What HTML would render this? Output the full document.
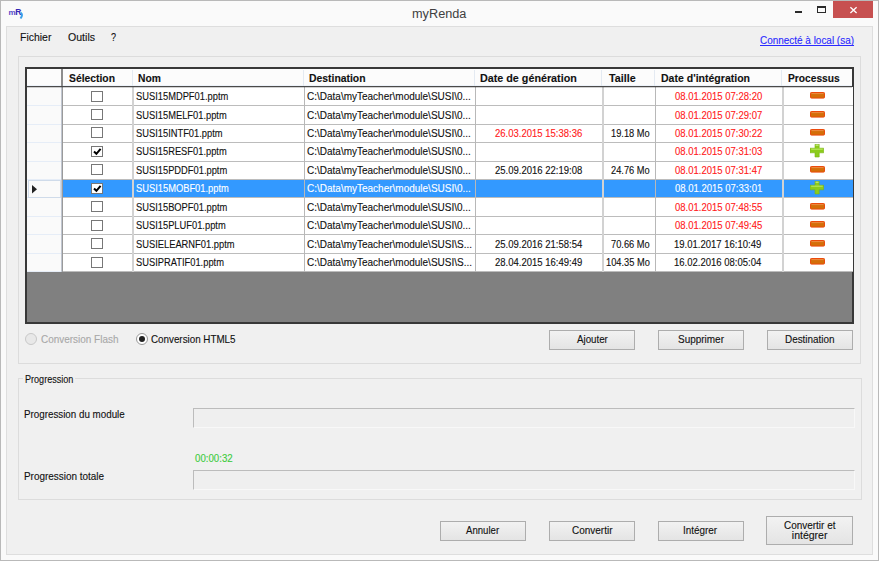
<!DOCTYPE html><html><head><meta charset="utf-8"><title>myRenda</title><style>
*{margin:0;padding:0;box-sizing:border-box}
html,body{width:879px;height:561px;overflow:hidden;background:#fafafa}
body{position:relative;font-family:"Liberation Sans",sans-serif;color:#000}
.a{position:absolute}
.t{position:absolute;white-space:pre;line-height:14px;height:14px;-webkit-text-stroke:0.12px currentColor}
</style></head><body>
<div class="a" style="left:0;top:0;width:879px;height:561px;border:1px solid #b9b9b9;background:#fafafa"></div>
<svg class="a" style="left:8px;top:8px" width="17" height="12"><text x="0.5" y="7" font-family="Liberation Sans" font-weight="bold" font-size="8" fill="#5548c8" letter-spacing="-0.6">m</text><text x="7.2" y="7" font-family="Liberation Sans" font-weight="bold" font-size="8.5" fill="#3426b4">R</text><path d="M12.5 4.5 Q15.5 6.5 12.5 10.5" stroke="#3aa0ea" stroke-width="2" fill="none"/></svg>
<div class="a" style="left:795px;top:11px;width:7px;height:2px;background:#2a2a2a"></div>
<div class="a" style="left:817px;top:6px;width:9px;height:7px;border:1px solid #2a2a2a;border-top-width:2px"></div>
<div class="a" style="left:833px;top:1px;width:40px;height:17px;background:#c75050"></div>
<svg class="a" style="left:849px;top:6px" width="9" height="8"><path d="M1.4 1.2 L7.6 7 M7.6 1.2 L1.4 7" stroke="#fff" stroke-width="1.3"/></svg>
<div class="a" style="left:6px;top:26px;width:867px;height:529px;background:#f0f0f0;border:1px solid #dedede"></div>
<div class="a" style="left:18px;top:56px;width:843px;height:308px;border:1px solid #dcdcdc"></div>
<div class="a" style="left:25px;top:67px;width:829px;height:257px;background:#808080;border:2px solid #383838"></div>
<div class="a" style="left:27px;top:69px;width:825px;height:17px;background:#fcfcfc"></div>
<div class="a" style="left:27px;top:86px;width:825px;height:1px;background:#4a4a4a"></div>
<div class="a" style="left:27px;top:85px;width:825px;height:1px;background:#eef3fa"></div>
<div class="a" style="left:61px;top:69px;width:2px;height:17px;background:#8c8c8c"></div>
<div class="a" style="left:132px;top:70px;width:1px;height:16px;background:#e4eaf2"></div>
<div class="a" style="left:303px;top:70px;width:1px;height:16px;background:#e4eaf2"></div>
<div class="a" style="left:474px;top:70px;width:1px;height:16px;background:#e4eaf2"></div>
<div class="a" style="left:601px;top:70px;width:1px;height:16px;background:#e4eaf2"></div>
<div class="a" style="left:654px;top:70px;width:1px;height:16px;background:#e4eaf2"></div>
<div class="a" style="left:781px;top:70px;width:1px;height:16px;background:#e4eaf2"></div>
<div class="a" style="left:27px;top:87px;width:34px;height:18px;background:#fafafa"></div>
<div class="a" style="left:27px;top:105px;width:34px;height:1px;background:#e6edf7"></div>
<div class="a" style="left:62px;top:87px;width:791px;height:18px;background:#fff"></div>
<div class="a" style="left:61px;top:105px;width:792px;height:1px;background:#bcbcbc"></div>
<div class="a" style="left:61px;top:87px;width:1px;height:19px;background:#c0c6d0"></div>
<div class="a" style="left:62px;top:87px;width:1px;height:19px;background:#9a9a9a"></div>
<div class="a" style="left:132px;top:87px;width:2px;height:19px;background:#d2d2d2"></div>
<div class="a" style="left:304px;top:87px;width:1px;height:19px;background:#b8b8b8"></div>
<div class="a" style="left:475px;top:87px;width:1px;height:19px;background:#b8b8b8"></div>
<div class="a" style="left:602px;top:87px;width:2px;height:19px;background:#d2d2d2"></div>
<div class="a" style="left:655px;top:87px;width:1px;height:19px;background:#b8b8b8"></div>
<div class="a" style="left:782px;top:87px;width:2px;height:19px;background:#d2d2d2"></div>
<div class="a" style="left:91px;top:91px;width:12px;height:11px;border:1px solid #777;background:#fff"></div>
<svg class="a" style="left:810px;top:92px" width="15" height="7"><rect x="0.5" y="0.5" width="14" height="5.6" rx="0.8" fill="#d46e08" stroke="#ec4a0c" stroke-width="1"/><path d="M1.5 1.6h12" stroke="#f49050" stroke-width="0.8"/></svg>
<div class="a" style="left:27px;top:106px;width:34px;height:18px;background:#fafafa"></div>
<div class="a" style="left:27px;top:124px;width:34px;height:1px;background:#e6edf7"></div>
<div class="a" style="left:62px;top:106px;width:791px;height:18px;background:#fff"></div>
<div class="a" style="left:61px;top:124px;width:792px;height:1px;background:#bcbcbc"></div>
<div class="a" style="left:61px;top:106px;width:1px;height:19px;background:#c0c6d0"></div>
<div class="a" style="left:62px;top:106px;width:1px;height:19px;background:#9a9a9a"></div>
<div class="a" style="left:132px;top:106px;width:2px;height:19px;background:#d2d2d2"></div>
<div class="a" style="left:304px;top:106px;width:1px;height:19px;background:#b8b8b8"></div>
<div class="a" style="left:475px;top:106px;width:1px;height:19px;background:#b8b8b8"></div>
<div class="a" style="left:602px;top:106px;width:2px;height:19px;background:#d2d2d2"></div>
<div class="a" style="left:655px;top:106px;width:1px;height:19px;background:#b8b8b8"></div>
<div class="a" style="left:782px;top:106px;width:2px;height:19px;background:#d2d2d2"></div>
<div class="a" style="left:91px;top:109px;width:12px;height:11px;border:1px solid #777;background:#fff"></div>
<svg class="a" style="left:810px;top:111px" width="15" height="7"><rect x="0.5" y="0.5" width="14" height="5.6" rx="0.8" fill="#d46e08" stroke="#ec4a0c" stroke-width="1"/><path d="M1.5 1.6h12" stroke="#f49050" stroke-width="0.8"/></svg>
<div class="a" style="left:27px;top:125px;width:34px;height:17px;background:#fafafa"></div>
<div class="a" style="left:27px;top:142px;width:34px;height:1px;background:#e6edf7"></div>
<div class="a" style="left:62px;top:125px;width:791px;height:17px;background:#fff"></div>
<div class="a" style="left:61px;top:142px;width:792px;height:1px;background:#bcbcbc"></div>
<div class="a" style="left:61px;top:125px;width:1px;height:18px;background:#c0c6d0"></div>
<div class="a" style="left:62px;top:125px;width:1px;height:18px;background:#9a9a9a"></div>
<div class="a" style="left:132px;top:125px;width:2px;height:18px;background:#d2d2d2"></div>
<div class="a" style="left:304px;top:125px;width:1px;height:18px;background:#b8b8b8"></div>
<div class="a" style="left:475px;top:125px;width:1px;height:18px;background:#b8b8b8"></div>
<div class="a" style="left:602px;top:125px;width:2px;height:18px;background:#d2d2d2"></div>
<div class="a" style="left:655px;top:125px;width:1px;height:18px;background:#b8b8b8"></div>
<div class="a" style="left:782px;top:125px;width:2px;height:18px;background:#d2d2d2"></div>
<div class="a" style="left:91px;top:127px;width:12px;height:11px;border:1px solid #777;background:#fff"></div>
<svg class="a" style="left:810px;top:129px" width="15" height="7"><rect x="0.5" y="0.5" width="14" height="5.6" rx="0.8" fill="#d46e08" stroke="#ec4a0c" stroke-width="1"/><path d="M1.5 1.6h12" stroke="#f49050" stroke-width="0.8"/></svg>
<div class="a" style="left:27px;top:143px;width:34px;height:18px;background:#fafafa"></div>
<div class="a" style="left:27px;top:161px;width:34px;height:1px;background:#e6edf7"></div>
<div class="a" style="left:62px;top:143px;width:791px;height:18px;background:#fff"></div>
<div class="a" style="left:61px;top:161px;width:792px;height:1px;background:#bcbcbc"></div>
<div class="a" style="left:61px;top:143px;width:1px;height:19px;background:#c0c6d0"></div>
<div class="a" style="left:62px;top:143px;width:1px;height:19px;background:#9a9a9a"></div>
<div class="a" style="left:132px;top:143px;width:2px;height:19px;background:#d2d2d2"></div>
<div class="a" style="left:304px;top:143px;width:1px;height:19px;background:#b8b8b8"></div>
<div class="a" style="left:475px;top:143px;width:1px;height:19px;background:#b8b8b8"></div>
<div class="a" style="left:602px;top:143px;width:2px;height:19px;background:#d2d2d2"></div>
<div class="a" style="left:655px;top:143px;width:1px;height:19px;background:#b8b8b8"></div>
<div class="a" style="left:782px;top:143px;width:2px;height:19px;background:#d2d2d2"></div>
<div class="a" style="left:91px;top:146px;width:12px;height:11px;border:1px solid #777;background:#fff"></div>
<svg class="a" style="left:91px;top:146px" width="12" height="11"><path d="M3 5.5 L5.4 7.8 L9.6 2.8" stroke="#000" stroke-width="2" fill="none"/></svg>
<svg class="a" style="left:810px;top:144px" width="14" height="14"><path d="M5 0.2h4.2v4h4.5v4.6h-4.5v4.2h-4.2v-4.2h-5v-4.6h5z" fill="#8ccc1c" stroke="#78b414" stroke-width="0.6"/><path d="M1.2 5.2h11.5" stroke="#c4ee6c" stroke-width="0.9"/><path d="M5.6 1.2h3" stroke="#d8f49a" stroke-width="0.9"/></svg>
<div class="a" style="left:27px;top:162px;width:34px;height:17px;background:#fafafa"></div>
<div class="a" style="left:27px;top:179px;width:34px;height:1px;background:#e6edf7"></div>
<div class="a" style="left:62px;top:162px;width:791px;height:17px;background:#fff"></div>
<div class="a" style="left:61px;top:179px;width:792px;height:1px;background:#bcbcbc"></div>
<div class="a" style="left:61px;top:162px;width:1px;height:18px;background:#c0c6d0"></div>
<div class="a" style="left:62px;top:162px;width:1px;height:18px;background:#9a9a9a"></div>
<div class="a" style="left:132px;top:162px;width:2px;height:18px;background:#d2d2d2"></div>
<div class="a" style="left:304px;top:162px;width:1px;height:18px;background:#b8b8b8"></div>
<div class="a" style="left:475px;top:162px;width:1px;height:18px;background:#b8b8b8"></div>
<div class="a" style="left:602px;top:162px;width:2px;height:18px;background:#d2d2d2"></div>
<div class="a" style="left:655px;top:162px;width:1px;height:18px;background:#b8b8b8"></div>
<div class="a" style="left:782px;top:162px;width:2px;height:18px;background:#d2d2d2"></div>
<div class="a" style="left:91px;top:164px;width:12px;height:11px;border:1px solid #777;background:#fff"></div>
<svg class="a" style="left:810px;top:166px" width="15" height="7"><rect x="0.5" y="0.5" width="14" height="5.6" rx="0.8" fill="#d46e08" stroke="#ec4a0c" stroke-width="1"/><path d="M1.5 1.6h12" stroke="#f49050" stroke-width="0.8"/></svg>
<div class="a" style="left:27px;top:180px;width:34px;height:17px;background:#fafafa"></div>
<div class="a" style="left:27px;top:197px;width:34px;height:1px;background:#e6edf7"></div>
<div class="a" style="left:28px;top:180px;width:33px;height:18px;border:1px solid #cfdbea"></div>
<svg class="a" style="left:32px;top:185px" width="6" height="9"><path d="M0 0 L5 4.3 L0 8.6Z" fill="#222"/></svg>
<div class="a" style="left:62px;top:180px;width:791px;height:17px;background:#3399ff"></div>
<div class="a" style="left:61px;top:197px;width:792px;height:1px;background:#bcbcbc"></div>
<div class="a" style="left:61px;top:180px;width:1px;height:18px;background:#c0c6d0"></div>
<div class="a" style="left:62px;top:180px;width:1px;height:18px;background:#9a9a9a"></div>
<div class="a" style="left:132px;top:180px;width:2px;height:18px;background:#d2d2d2"></div>
<div class="a" style="left:304px;top:180px;width:1px;height:18px;background:#b8b8b8"></div>
<div class="a" style="left:475px;top:180px;width:1px;height:18px;background:#b8b8b8"></div>
<div class="a" style="left:602px;top:180px;width:2px;height:18px;background:#d2d2d2"></div>
<div class="a" style="left:655px;top:180px;width:1px;height:18px;background:#b8b8b8"></div>
<div class="a" style="left:782px;top:180px;width:2px;height:18px;background:#d2d2d2"></div>
<div class="a" style="left:91px;top:183px;width:12px;height:11px;border:1px solid #777;background:#fff"></div>
<svg class="a" style="left:91px;top:183px" width="12" height="11"><path d="M3 5.5 L5.4 7.8 L9.6 2.8" stroke="#000" stroke-width="2" fill="none"/></svg>
<svg class="a" style="left:810px;top:181px" width="14" height="14"><path d="M5 0.2h4.2v4h4.5v4.6h-4.5v4.2h-4.2v-4.2h-5v-4.6h5z" fill="#8ccc1c" stroke="#78b414" stroke-width="0.6"/><path d="M1.2 5.2h11.5" stroke="#c4ee6c" stroke-width="0.9"/><path d="M5.6 1.2h3" stroke="#d8f49a" stroke-width="0.9"/></svg>
<div class="a" style="left:27px;top:198px;width:34px;height:18px;background:#fafafa"></div>
<div class="a" style="left:27px;top:216px;width:34px;height:1px;background:#e6edf7"></div>
<div class="a" style="left:62px;top:198px;width:791px;height:18px;background:#fff"></div>
<div class="a" style="left:61px;top:216px;width:792px;height:1px;background:#bcbcbc"></div>
<div class="a" style="left:61px;top:198px;width:1px;height:19px;background:#c0c6d0"></div>
<div class="a" style="left:62px;top:198px;width:1px;height:19px;background:#9a9a9a"></div>
<div class="a" style="left:132px;top:198px;width:2px;height:19px;background:#d2d2d2"></div>
<div class="a" style="left:304px;top:198px;width:1px;height:19px;background:#b8b8b8"></div>
<div class="a" style="left:475px;top:198px;width:1px;height:19px;background:#b8b8b8"></div>
<div class="a" style="left:602px;top:198px;width:2px;height:19px;background:#d2d2d2"></div>
<div class="a" style="left:655px;top:198px;width:1px;height:19px;background:#b8b8b8"></div>
<div class="a" style="left:782px;top:198px;width:2px;height:19px;background:#d2d2d2"></div>
<div class="a" style="left:91px;top:201px;width:12px;height:11px;border:1px solid #777;background:#fff"></div>
<svg class="a" style="left:810px;top:203px" width="15" height="7"><rect x="0.5" y="0.5" width="14" height="5.6" rx="0.8" fill="#d46e08" stroke="#ec4a0c" stroke-width="1"/><path d="M1.5 1.6h12" stroke="#f49050" stroke-width="0.8"/></svg>
<div class="a" style="left:27px;top:217px;width:34px;height:17px;background:#fafafa"></div>
<div class="a" style="left:27px;top:234px;width:34px;height:1px;background:#e6edf7"></div>
<div class="a" style="left:62px;top:217px;width:791px;height:17px;background:#fff"></div>
<div class="a" style="left:61px;top:234px;width:792px;height:1px;background:#bcbcbc"></div>
<div class="a" style="left:61px;top:217px;width:1px;height:18px;background:#c0c6d0"></div>
<div class="a" style="left:62px;top:217px;width:1px;height:18px;background:#9a9a9a"></div>
<div class="a" style="left:132px;top:217px;width:2px;height:18px;background:#d2d2d2"></div>
<div class="a" style="left:304px;top:217px;width:1px;height:18px;background:#b8b8b8"></div>
<div class="a" style="left:475px;top:217px;width:1px;height:18px;background:#b8b8b8"></div>
<div class="a" style="left:602px;top:217px;width:2px;height:18px;background:#d2d2d2"></div>
<div class="a" style="left:655px;top:217px;width:1px;height:18px;background:#b8b8b8"></div>
<div class="a" style="left:782px;top:217px;width:2px;height:18px;background:#d2d2d2"></div>
<div class="a" style="left:91px;top:220px;width:12px;height:11px;border:1px solid #777;background:#fff"></div>
<svg class="a" style="left:810px;top:221px" width="15" height="7"><rect x="0.5" y="0.5" width="14" height="5.6" rx="0.8" fill="#d46e08" stroke="#ec4a0c" stroke-width="1"/><path d="M1.5 1.6h12" stroke="#f49050" stroke-width="0.8"/></svg>
<div class="a" style="left:27px;top:235px;width:34px;height:18px;background:#fafafa"></div>
<div class="a" style="left:27px;top:253px;width:34px;height:1px;background:#e6edf7"></div>
<div class="a" style="left:62px;top:235px;width:791px;height:18px;background:#fff"></div>
<div class="a" style="left:61px;top:253px;width:792px;height:1px;background:#bcbcbc"></div>
<div class="a" style="left:61px;top:235px;width:1px;height:19px;background:#c0c6d0"></div>
<div class="a" style="left:62px;top:235px;width:1px;height:19px;background:#9a9a9a"></div>
<div class="a" style="left:132px;top:235px;width:2px;height:19px;background:#d2d2d2"></div>
<div class="a" style="left:304px;top:235px;width:1px;height:19px;background:#b8b8b8"></div>
<div class="a" style="left:475px;top:235px;width:1px;height:19px;background:#b8b8b8"></div>
<div class="a" style="left:602px;top:235px;width:2px;height:19px;background:#d2d2d2"></div>
<div class="a" style="left:655px;top:235px;width:1px;height:19px;background:#b8b8b8"></div>
<div class="a" style="left:782px;top:235px;width:2px;height:19px;background:#d2d2d2"></div>
<div class="a" style="left:91px;top:238px;width:12px;height:11px;border:1px solid #777;background:#fff"></div>
<svg class="a" style="left:810px;top:240px" width="15" height="7"><rect x="0.5" y="0.5" width="14" height="5.6" rx="0.8" fill="#d46e08" stroke="#ec4a0c" stroke-width="1"/><path d="M1.5 1.6h12" stroke="#f49050" stroke-width="0.8"/></svg>
<div class="a" style="left:27px;top:254px;width:34px;height:17px;background:#fafafa"></div>
<div class="a" style="left:27px;top:271px;width:34px;height:1px;background:#e6edf7"></div>
<div class="a" style="left:62px;top:254px;width:791px;height:17px;background:#fff"></div>
<div class="a" style="left:61px;top:271px;width:792px;height:1px;background:#bcbcbc"></div>
<div class="a" style="left:61px;top:254px;width:1px;height:18px;background:#c0c6d0"></div>
<div class="a" style="left:62px;top:254px;width:1px;height:18px;background:#9a9a9a"></div>
<div class="a" style="left:132px;top:254px;width:2px;height:18px;background:#d2d2d2"></div>
<div class="a" style="left:304px;top:254px;width:1px;height:18px;background:#b8b8b8"></div>
<div class="a" style="left:475px;top:254px;width:1px;height:18px;background:#b8b8b8"></div>
<div class="a" style="left:602px;top:254px;width:2px;height:18px;background:#d2d2d2"></div>
<div class="a" style="left:655px;top:254px;width:1px;height:18px;background:#b8b8b8"></div>
<div class="a" style="left:782px;top:254px;width:2px;height:18px;background:#d2d2d2"></div>
<div class="a" style="left:91px;top:257px;width:12px;height:11px;border:1px solid #777;background:#fff"></div>
<svg class="a" style="left:810px;top:258px" width="15" height="7"><rect x="0.5" y="0.5" width="14" height="5.6" rx="0.8" fill="#d46e08" stroke="#ec4a0c" stroke-width="1"/><path d="M1.5 1.6h12" stroke="#f49050" stroke-width="0.8"/></svg>
<div class="a" style="left:27px;top:87px;width:825px;height:1px;background:rgba(0,0,0,0.18)"></div>
<div class="a" style="left:25px;top:333px;width:12px;height:12px;border-radius:50%;border:1px solid #c8c8c8;background:#e8e8e8"></div>
<div class="a" style="left:136px;top:333px;width:12px;height:12px;border-radius:50%;border:1px solid #999;background:#fff"></div>
<div class="a" style="left:139px;top:336px;width:6px;height:6px;border-radius:50%;background:#222"></div>
<div class="a" style="left:549px;top:330px;width:86px;height:20px;border:1px solid #adadad;background:linear-gradient(#f2f2f2,#e4e4e4)"></div>
<div class="a" style="left:658px;top:330px;width:86px;height:20px;border:1px solid #adadad;background:linear-gradient(#f2f2f2,#e4e4e4)"></div>
<div class="a" style="left:767px;top:330px;width:86px;height:20px;border:1px solid #adadad;background:linear-gradient(#f2f2f2,#e4e4e4)"></div>
<div class="a" style="left:18px;top:378px;width:844px;height:122px;border:1px solid #dcdcdc"></div>
<div class="a" style="left:23px;top:374px;width:52px;height:10px;background:#f0f0f0"></div>
<div class="a" style="left:193px;top:408px;width:662px;height:20px;border:1px solid #f8f8f8;border-top-color:#bcbcbc;border-left-color:#bcbcbc;background:#efefef"></div>
<div class="a" style="left:193px;top:470px;width:662px;height:20px;border:1px solid #f8f8f8;border-top-color:#bcbcbc;border-left-color:#bcbcbc;background:#efefef"></div>
<div class="a" style="left:440px;top:521px;width:86px;height:20px;border:1px solid #adadad;background:linear-gradient(#f2f2f2,#e4e4e4)"></div>
<div class="a" style="left:549px;top:521px;width:86px;height:20px;border:1px solid #adadad;background:linear-gradient(#f2f2f2,#e4e4e4)"></div>
<div class="a" style="left:658px;top:521px;width:86px;height:20px;border:1px solid #adadad;background:linear-gradient(#f2f2f2,#e4e4e4)"></div>
<div class="a" style="left:766px;top:516px;width:87px;height:29px;border:1px solid #adadad;background:linear-gradient(#f2f2f2,#e4e4e4)"></div>
<div class="t" style="left:411.94px;top:7.20px;font-size:12px;color:#404040;transform:scaleX(1.0600);transform-origin:0 0;-webkit-text-stroke:0;">myRenda</div>
<div class="t" style="left:19.65px;top:29.70px;font-size:11px;color:#111;transform:scaleX(0.9500);transform-origin:0 0;">Fichier</div>
<div class="t" style="left:67.70px;top:29.70px;font-size:11px;color:#111;transform:scaleX(0.9607);transform-origin:0 0;">Outils</div>
<div class="t" style="left:110.88px;top:29.70px;font-size:11px;color:#111;transform:scaleX(0.8200);transform-origin:0 0;">?</div>
<div class="t" style="left:759.80px;top:32.60px;font-size:10.5px;color:#2a2aff;transform:scaleX(0.9475);transform-origin:0 0;text-decoration:underline;text-decoration-skip-ink:none;">Connecté à local (sa)</div>
<div class="t" style="left:68.80px;top:70.90px;font-size:11px;font-weight:bold;color:#111;transform:scaleX(0.9408);transform-origin:0 0;">Sélection</div>
<div class="t" style="left:138.17px;top:70.90px;font-size:11px;font-weight:bold;color:#111;transform:scaleX(0.9348);transform-origin:0 0;">Nom</div>
<div class="t" style="left:309.26px;top:70.90px;font-size:11px;font-weight:bold;color:#111;transform:scaleX(0.9441);transform-origin:0 0;">Destination</div>
<div class="t" style="left:480.22px;top:70.90px;font-size:11px;font-weight:bold;color:#111;transform:scaleX(0.9776);transform-origin:0 0;">Date de génération</div>
<div class="t" style="left:609.20px;top:70.90px;font-size:11px;font-weight:bold;color:#111;transform:scaleX(0.9741);transform-origin:0 0;">Taille</div>
<div class="t" style="left:660.54px;top:70.90px;font-size:11px;font-weight:bold;color:#111;transform:scaleX(0.9565);transform-origin:0 0;">Date d'intégration</div>
<div class="t" style="left:787.97px;top:70.90px;font-size:11px;font-weight:bold;color:#111;transform:scaleX(0.9296);transform-origin:0 0;">Processus</div>
<div class="t" style="left:136.11px;top:89.05px;font-size:10.5px;color:#111;transform:scaleX(0.8883);transform-origin:0 0;">SUSI15MDPF01.pptm</div>
<div class="t" style="left:306.80px;top:89.05px;font-size:10.5px;color:#111;transform:scaleX(0.9520);transform-origin:0 0;">C:\Data\myTeacher\module\SUSI\0...</div>
<div class="t" style="left:674.50px;top:89.05px;font-size:10.5px;color:#ff2020;transform:scaleX(0.9062);transform-origin:0 0;">08.01.2015 07:28:20</div>
<div class="t" style="left:136.11px;top:107.50px;font-size:10.5px;color:#111;transform:scaleX(0.8883);transform-origin:0 0;">SUSI15MELF01.pptm</div>
<div class="t" style="left:306.80px;top:107.50px;font-size:10.5px;color:#111;transform:scaleX(0.9520);transform-origin:0 0;">C:\Data\myTeacher\module\SUSI\0...</div>
<div class="t" style="left:674.50px;top:107.50px;font-size:10.5px;color:#ff2020;transform:scaleX(0.9062);transform-origin:0 0;">08.01.2015 07:29:07</div>
<div class="t" style="left:136.11px;top:125.95px;font-size:10.5px;color:#111;transform:scaleX(0.8883);transform-origin:0 0;">SUSI15INTF01.pptm</div>
<div class="t" style="left:306.80px;top:125.95px;font-size:10.5px;color:#111;transform:scaleX(0.9520);transform-origin:0 0;">C:\Data\myTeacher\module\SUSI\0...</div>
<div class="t" style="left:494.50px;top:125.95px;font-size:10.5px;color:#ff2020;transform:scaleX(0.9062);transform-origin:0 0;">26.03.2015 15:38:36</div>
<div class="t" style="left:610.82px;top:125.95px;font-size:10.5px;color:#111;transform:scaleX(0.8837);transform-origin:0 0;">19.18 Mo</div>
<div class="t" style="left:674.50px;top:125.95px;font-size:10.5px;color:#ff2020;transform:scaleX(0.9062);transform-origin:0 0;">08.01.2015 07:30:22</div>
<div class="t" style="left:136.11px;top:144.40px;font-size:10.5px;color:#111;transform:scaleX(0.8883);transform-origin:0 0;">SUSI15RESF01.pptm</div>
<div class="t" style="left:306.80px;top:144.40px;font-size:10.5px;color:#111;transform:scaleX(0.9520);transform-origin:0 0;">C:\Data\myTeacher\module\SUSI\0...</div>
<div class="t" style="left:674.50px;top:144.40px;font-size:10.5px;color:#ff2020;transform:scaleX(0.9062);transform-origin:0 0;">08.01.2015 07:31:03</div>
<div class="t" style="left:136.11px;top:162.85px;font-size:10.5px;color:#111;transform:scaleX(0.8883);transform-origin:0 0;">SUSI15PDDF01.pptm</div>
<div class="t" style="left:306.80px;top:162.85px;font-size:10.5px;color:#111;transform:scaleX(0.9520);transform-origin:0 0;">C:\Data\myTeacher\module\SUSI\0...</div>
<div class="t" style="left:494.50px;top:162.85px;font-size:10.5px;color:#111;transform:scaleX(0.9062);transform-origin:0 0;">25.09.2016 22:19:08</div>
<div class="t" style="left:610.82px;top:162.85px;font-size:10.5px;color:#111;transform:scaleX(0.8837);transform-origin:0 0;">24.76 Mo</div>
<div class="t" style="left:674.50px;top:162.85px;font-size:10.5px;color:#ff2020;transform:scaleX(0.9062);transform-origin:0 0;">08.01.2015 07:31:47</div>
<div class="t" style="left:136.11px;top:181.30px;font-size:10.5px;color:#fff;transform:scaleX(0.8883);transform-origin:0 0;">SUSI15MOBF01.pptm</div>
<div class="t" style="left:306.80px;top:181.30px;font-size:10.5px;color:#fff;transform:scaleX(0.9520);transform-origin:0 0;">C:\Data\myTeacher\module\SUSI\0...</div>
<div class="t" style="left:674.50px;top:181.30px;font-size:10.5px;color:#fff;transform:scaleX(0.9062);transform-origin:0 0;">08.01.2015 07:33:01</div>
<div class="t" style="left:136.11px;top:199.75px;font-size:10.5px;color:#111;transform:scaleX(0.8883);transform-origin:0 0;">SUSI15BOPF01.pptm</div>
<div class="t" style="left:306.80px;top:199.75px;font-size:10.5px;color:#111;transform:scaleX(0.9520);transform-origin:0 0;">C:\Data\myTeacher\module\SUSI\0...</div>
<div class="t" style="left:674.50px;top:199.75px;font-size:10.5px;color:#ff2020;transform:scaleX(0.9062);transform-origin:0 0;">08.01.2015 07:48:55</div>
<div class="t" style="left:136.11px;top:218.20px;font-size:10.5px;color:#111;transform:scaleX(0.8883);transform-origin:0 0;">SUSI15PLUF01.pptm</div>
<div class="t" style="left:306.80px;top:218.20px;font-size:10.5px;color:#111;transform:scaleX(0.9520);transform-origin:0 0;">C:\Data\myTeacher\module\SUSI\0...</div>
<div class="t" style="left:674.50px;top:218.20px;font-size:10.5px;color:#ff2020;transform:scaleX(0.9062);transform-origin:0 0;">08.01.2015 07:49:45</div>
<div class="t" style="left:136.11px;top:236.65px;font-size:10.5px;color:#111;transform:scaleX(0.8883);transform-origin:0 0;">SUSIELEARNF01.pptm</div>
<div class="t" style="left:306.80px;top:236.65px;font-size:10.5px;color:#111;transform:scaleX(0.9520);transform-origin:0 0;">C:\Data\myTeacher\module\SUSI\S...</div>
<div class="t" style="left:494.50px;top:236.65px;font-size:10.5px;color:#111;transform:scaleX(0.9062);transform-origin:0 0;">25.09.2016 21:58:54</div>
<div class="t" style="left:610.82px;top:236.65px;font-size:10.5px;color:#111;transform:scaleX(0.8837);transform-origin:0 0;">70.66 Mo</div>
<div class="t" style="left:674.05px;top:236.65px;font-size:10.5px;color:#111;transform:scaleX(0.9062);transform-origin:0 0;">19.01.2017 16:10:49</div>
<div class="t" style="left:136.11px;top:255.10px;font-size:10.5px;color:#111;transform:scaleX(0.8883);transform-origin:0 0;">SUSIPRATIF01.pptm</div>
<div class="t" style="left:306.80px;top:255.10px;font-size:10.5px;color:#111;transform:scaleX(0.9520);transform-origin:0 0;">C:\Data\myTeacher\module\SUSI\S...</div>
<div class="t" style="left:494.50px;top:255.10px;font-size:10.5px;color:#111;transform:scaleX(0.9062);transform-origin:0 0;">28.04.2015 16:49:49</div>
<div class="t" style="left:606.40px;top:255.10px;font-size:10.5px;color:#111;transform:scaleX(0.8837);transform-origin:0 0;">104.35 Mo</div>
<div class="t" style="left:674.05px;top:255.10px;font-size:10.5px;color:#111;transform:scaleX(0.9062);transform-origin:0 0;">16.02.2016 08:05:04</div>
<div class="t" style="left:40.70px;top:332.00px;font-size:10.5px;color:#a8a8a8;transform:scaleX(0.9481);transform-origin:0 0;">Conversion Flash</div>
<div class="t" style="left:151.40px;top:332.00px;font-size:10.5px;color:#111;transform:scaleX(0.9344);transform-origin:0 0;">Conversion HTML5</div>
<div class="t" style="left:577.00px;top:332.30px;font-size:10.5px;color:#111;transform:scaleX(0.9273);transform-origin:0 0;">Ajouter</div>
<div class="t" style="left:677.95px;top:332.30px;font-size:10.5px;color:#111;transform:scaleX(0.9489);transform-origin:0 0;">Supprimer</div>
<div class="t" style="left:784.96px;top:332.30px;font-size:10.5px;color:#111;transform:scaleX(0.9431);transform-origin:0 0;">Destination</div>
<div class="t" style="left:24.74px;top:371.60px;font-size:10.5px;color:#111;transform:scaleX(0.8636);transform-origin:0 0;">Progression</div>
<div class="t" style="left:23.87px;top:407.30px;font-size:10.5px;color:#111;transform:scaleX(0.9327);transform-origin:0 0;">Progression du module</div>
<div class="t" style="left:194.90px;top:451.40px;font-size:10.5px;color:#3ccc3c;transform:scaleX(0.9225);transform-origin:0 0;">00:00:32</div>
<div class="t" style="left:23.85px;top:468.80px;font-size:10.5px;color:#111;transform:scaleX(0.9458);transform-origin:0 0;">Progression totale</div>
<div class="t" style="left:466.30px;top:522.70px;font-size:10.5px;color:#111;transform:scaleX(0.9139);transform-origin:0 0;">Annuler</div>
<div class="t" style="left:571.90px;top:522.70px;font-size:10.5px;color:#111;transform:scaleX(0.9500);transform-origin:0 0;">Convertir</div>
<div class="t" style="left:683.36px;top:522.70px;font-size:10.5px;color:#111;transform:scaleX(0.9429);transform-origin:0 0;">Intégrer</div>
<div class="t" style="left:784.00px;top:517.90px;font-size:10.5px;color:#111;transform:scaleX(0.9481);transform-origin:0 0;">Convertir et</div>
<div class="t" style="left:791.80px;top:528.00px;font-size:10.5px;color:#111;transform:scaleX(1.0000);transform-origin:0 0;">intégrer</div>
</body></html>
